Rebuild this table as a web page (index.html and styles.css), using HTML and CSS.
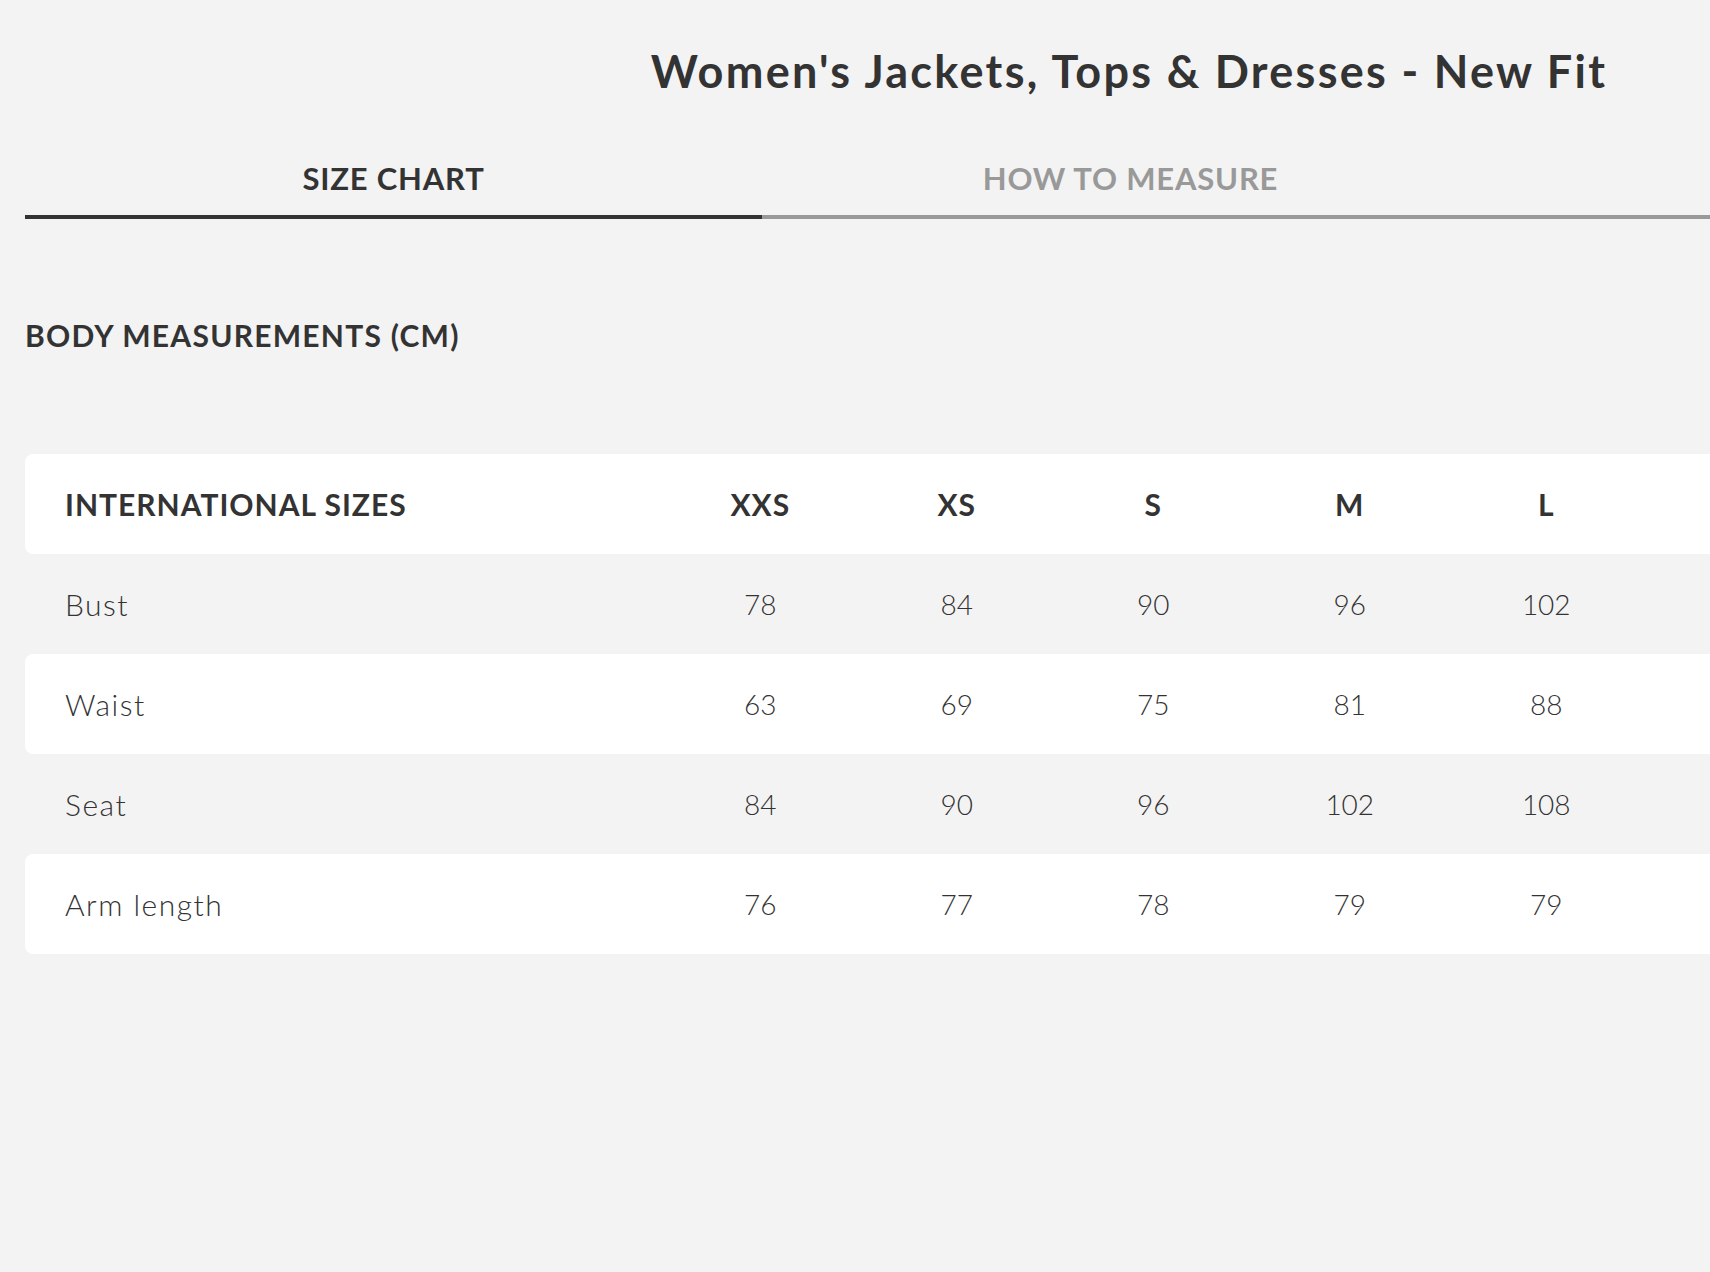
FILE: index.html
```html
<!DOCTYPE html>
<html lang="en">
<head>
<meta charset="utf-8">
<title>Size Guide</title>
<link rel="stylesheet" href="styles.css">
</head>
<body>
<div class="page">
  <h1 class="title">Women's Jackets, Tops &amp; Dresses - New Fit</h1>
  <div class="tabs">
    <div class="tab active">SIZE CHART</div>
    <div class="tab">HOW TO MEASURE</div>
  </div>
  <h2 class="section">BODY MEASUREMENTS (CM)</h2>
  <div class="table">
    <div class="row head">
      <div class="label">INTERNATIONAL SIZES</div>
      <div class="cell">XXS</div><div class="cell">XS</div><div class="cell">S</div><div class="cell">M</div><div class="cell">L</div>
    </div>
    <div class="row">
      <div class="label">Bust</div>
      <div class="cell">78</div><div class="cell">84</div><div class="cell">90</div><div class="cell">96</div><div class="cell">102</div>
    </div>
    <div class="row white">
      <div class="label">Waist</div>
      <div class="cell">63</div><div class="cell">69</div><div class="cell">75</div><div class="cell">81</div><div class="cell">88</div>
    </div>
    <div class="row">
      <div class="label">Seat</div>
      <div class="cell">84</div><div class="cell">90</div><div class="cell">96</div><div class="cell">102</div><div class="cell">108</div>
    </div>
    <div class="row white">
      <div class="label">Arm length</div>
      <div class="cell">76</div><div class="cell">77</div><div class="cell">78</div><div class="cell">79</div><div class="cell">79</div>
    </div>
  </div>
</div>
</body>
</html>
```

FILE: styles.css
```css
html, body {
  margin: 0;
  padding: 0;
  background: #f3f3f3;
  overflow: hidden;
}
body {
  font-family: Lato, "Noto Sans", sans-serif;
  color: #333333;
}
.page {
  width: 2208px;
  padding-left: 25px;
}
.title {
  margin: 44px 0 0;
  font-size: 45px;
  line-height: 54px;
  font-weight: 700;
  text-align: center;
  letter-spacing: 2.3px;
}
.tabs {
  display: flex;
  margin-top: 62px;
  border-bottom: 4px solid #999999;
}
.tab {
  width: 737px;
  text-align: center;
  font-size: 31px;
  line-height: 37px;
  font-weight: 700;
  letter-spacing: 0.8px;
  color: #999999;
  padding-bottom: 18px;
  margin-bottom: -4px;
  border-bottom: 4px solid #999999;
}
.tab.active {
  color: #333333;
  border-bottom-color: #333333;
}
.section {
  margin: 98px 0 0;
  font-size: 30px;
  line-height: 36px;
  font-weight: 700;
  letter-spacing: 1.25px;
}
.table {
  margin-top: 101px;
}
.row {
  display: grid;
  grid-template-columns: 637px repeat(5, 196.5px);
  align-items: center;
  height: 100px;
  border-radius: 8px;
  font-size: 28px;
  font-weight: 300;
}
.row.head, .row.white {
  background: #ffffff;
}
.row.head {
  font-size: 30px;
  font-weight: 700;
  letter-spacing: 1px;
}
.label {
  padding-left: 40px;
}
.row:not(.head) .label {
  font-size: 30px;
  letter-spacing: 1.5px;
}
.cell {
  text-align: center;
}
```
